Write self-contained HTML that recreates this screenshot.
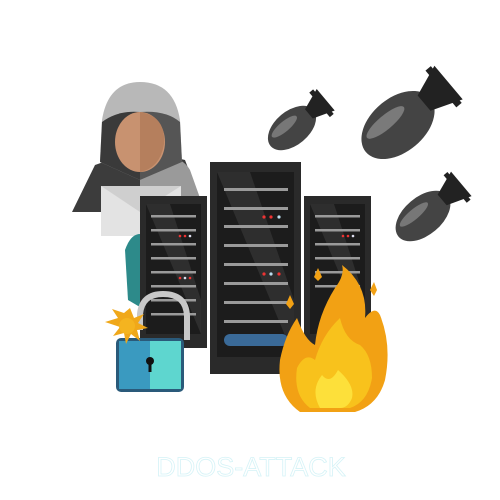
<!DOCTYPE html>
<html><head><style>html,body{margin:0;background:#fff;width:500px;height:500px;overflow:hidden}</style></head>
<body>
<svg width="500" height="500" viewBox="0 0 500 500" xmlns="http://www.w3.org/2000/svg">
<!-- hacker -->
<path d="M72 212 L95 165 Q140 148 185 160 L205 212 Z" fill="#3c3c3c"/>
<path d="M140 152 Q180 152 190 170 L205 212 L140 212 Z" fill="#9a9a9a"/>
<path d="M102 120 Q108 82 140 82 Q174 82 180 120 L182 162 L140 180 L100 162 Z" fill="#b8b8b8"/>
<path d="M102 122 Q118 110 140 112 L140 180 L100 162 Z" fill="#3a3a3a"/>
<path d="M140 112 Q166 110 180 122 L182 162 L140 180Z" fill="#555"/>
<ellipse cx="140" cy="142" rx="25" ry="30" fill="#c89270"/>
<path d="M140 112 L140 172 Q160 168 164 144 Q166 116 140 112Z" fill="#b57f5d"/>
<rect x="101" y="186" width="80" height="50" fill="#e3e3e3"/>
<path d="M101 186 L140 212 L181 186Z" fill="#cfcfcf"/>
<path d="M125 250 Q132 230 145 235 L145 310 L128 300Z" fill="#2d8a8a"/>
<!-- servers -->
<g>
<rect x="140" y="196" width="67" height="152" fill="#2a2a2a"/>
<rect x="146" y="204" width="55" height="130" fill="#1c1c1c"/>
<path d="M146 204 L170 204 L201 300 L201 334Z" fill="#333" opacity=".8"/>
<g fill="#9a9a9a"><rect x="151" y="215" width="45" height="2.5"/><rect x="151" y="229" width="45" height="2.5"/><rect x="151" y="243" width="45" height="2.5"/><rect x="151" y="257" width="45" height="2.5"/><rect x="151" y="271" width="45" height="2.5"/><rect x="151" y="285" width="45" height="2.5"/><rect x="151" y="299" width="45" height="2.5"/><rect x="151" y="313" width="45" height="2.5"/></g>
<circle cx="180" cy="236" r="1.3" fill="#e33"/><circle cx="185" cy="236" r="1.3" fill="#e33"/><circle cx="190" cy="236" r="1.3" fill="#dde"/>
<circle cx="180" cy="278" r="1.3" fill="#e33"/><circle cx="185" cy="278" r="1.3" fill="#dde"/><circle cx="190" cy="278" r="1.3" fill="#e33"/>
</g>
<g>
<rect x="304" y="196" width="67" height="152" fill="#2a2a2a"/>
<rect x="310" y="204" width="55" height="130" fill="#1c1c1c"/>
<path d="M310 204 L334 204 L365 300 L365 334Z" fill="#333" opacity=".8"/>
<g fill="#9a9a9a"><rect x="315" y="215" width="45" height="2.5"/><rect x="315" y="229" width="45" height="2.5"/><rect x="315" y="243" width="45" height="2.5"/><rect x="315" y="257" width="45" height="2.5"/><rect x="315" y="271" width="45" height="2.5"/><rect x="315" y="285" width="45" height="2.5"/></g>
<circle cx="343" cy="236" r="1.3" fill="#e33"/><circle cx="348" cy="236" r="1.3" fill="#e33"/><circle cx="353" cy="236" r="1.3" fill="#dde"/>
</g>
<g>
<rect x="210" y="162" width="91" height="212" fill="#2a2a2a"/>
<rect x="217" y="172" width="77" height="185" fill="#1c1c1c"/>
<path d="M217 172 L250 172 L294 300 L294 357Z" fill="#333" opacity=".8"/>
<g fill="#9a9a9a"><rect x="224" y="188" width="64" height="3"/><rect x="224" y="207" width="64" height="3"/><rect x="224" y="225" width="64" height="3"/><rect x="224" y="244" width="64" height="3"/><rect x="224" y="263" width="64" height="3"/><rect x="224" y="282" width="64" height="3"/><rect x="224" y="301" width="64" height="3"/><rect x="224" y="320" width="64" height="3"/></g>
<circle cx="264" cy="217" r="1.6" fill="#e33"/><circle cx="271" cy="217" r="1.6" fill="#e33"/><circle cx="279" cy="217" r="1.6" fill="#bde"/>
<circle cx="264" cy="274" r="1.6" fill="#e33"/><circle cx="271" cy="274" r="1.6" fill="#bde"/><circle cx="279" cy="274" r="1.6" fill="#e33"/>
<rect x="224" y="334" width="64" height="12" rx="6" fill="#3a6a98"/>
</g>
<!-- lock -->
<path d="M140 330 L140 314 Q142 294 163 294 Q186 294 187 316 L187 340" fill="none" stroke="#c8c8c8" stroke-width="6"/>
<rect x="116" y="338" width="68" height="54" rx="5" fill="#2a5a7a"/>
<rect x="119" y="341" width="31" height="48" fill="#3a9ac0"/>
<rect x="150" y="341" width="31" height="48" fill="#5ed6cf"/>
<circle cx="150" cy="361" r="4" fill="#111"/><rect x="148.5" y="362" width="3" height="10" fill="#111"/>
<polygon points="130,308 134,318 144,314 138,323 148,328 137,330 140,341 131,334 126,344 124,333 113,336 120,327 105,322 118,318 112,309 124,313" fill="#f0a81a"/>
<circle cx="127" cy="326" r="8" fill="#f4b420"/>
<!-- fire -->
<path d="M300 412 Q276 395 280 360 Q285 335 297 318 Q305 340 315 345 Q318 315 335 288 Q345 275 342 265 Q368 285 365 318 Q375 305 380 315 Q392 345 385 380 Q378 405 355 412Z" fill="#f2a114"/>
<path d="M310 408 Q293 395 297 368 Q305 352 315 360 Q322 335 340 318 Q345 340 360 345 Q372 355 372 378 Q368 402 350 408Z" fill="#f8c21c"/>
<path d="M320 408 Q310 390 322 375 Q330 385 338 370 Q355 385 352 398 Q348 408 340 408Z" fill="#fde03a"/>
<path d="M318 268 l4 9 l-4 4 l-4 -4Z M290 295 l4 9 l-4 5 l-4 -5Z M370 290 l4 -8 l3 8 l-3 6Z" fill="#f2a114"/>
<!-- bombs -->
<g transform="translate(292 128) rotate(-40)">
<ellipse cx="0" cy="0" rx="28" ry="17" fill="#444"/><ellipse cx="-5" cy="-6" rx="16" ry="5" fill="#777"/>
<path d="M22 -6 L44 -14 L44 14 L22 6Z" fill="#222"/><rect x="36" y="-16" width="5" height="32" fill="#222"/>
</g>
<g transform="translate(398 125) rotate(-40)">
<ellipse cx="0" cy="0" rx="42" ry="27" fill="#444"/><ellipse cx="-8" cy="-10" rx="24" ry="7" fill="#7a7a7a"/>
<path d="M34 -10 L66 -22 L66 22 L34 10Z" fill="#222"/><rect x="56" y="-24" width="7" height="48" fill="#222"/>
</g>
<g transform="translate(423 216) rotate(-40)">
<ellipse cx="0" cy="0" rx="32" ry="19" fill="#444"/><ellipse cx="-6" cy="-7" rx="18" ry="5" fill="#777"/>
<path d="M25 -7 L50 -16 L50 16 L25 7Z" fill="#222"/><rect x="42" y="-18" width="5" height="36" fill="#222"/>
</g>
<text x="251" y="476" text-anchor="middle" font-family="Liberation Sans, sans-serif" font-size="27" fill="#fff" stroke="#d6f3f7" stroke-width="0.8">DDOS-ATTACK</text>
</svg>
</body></html>
